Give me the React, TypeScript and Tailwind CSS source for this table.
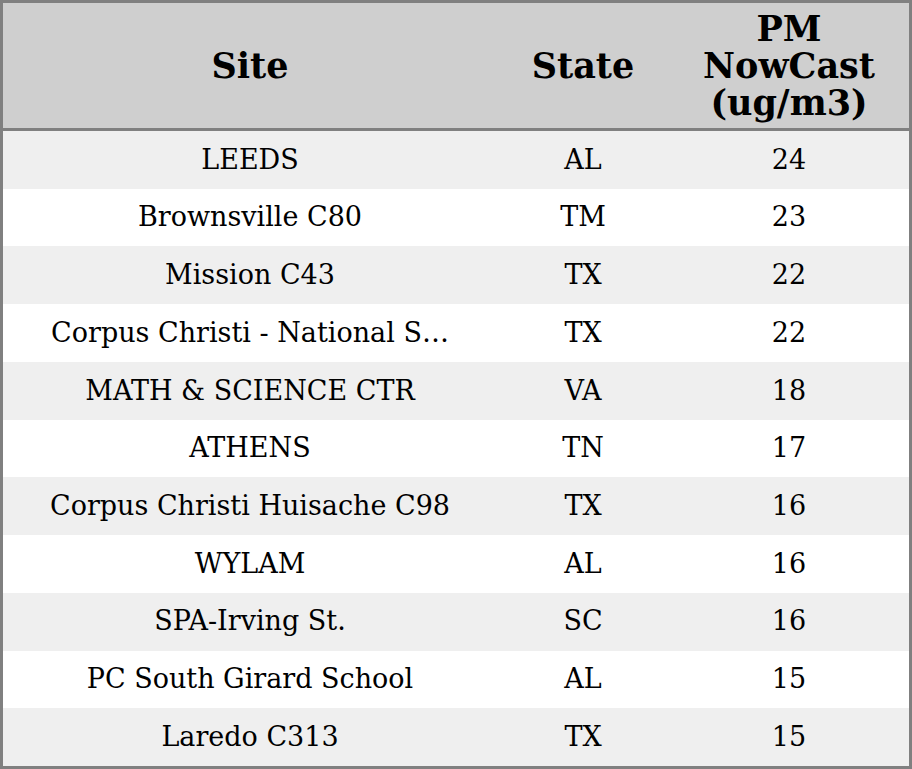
import React from "react";

const rows: [string, string, string][] = [
  ["LEEDS", "AL", "24"],
  ["Brownsville C80", "TM", "23"],
  ["Mission C43", "TX", "22"],
  ["Corpus Christi - National S…", "TX", "22"],
  ["MATH & SCIENCE CTR", "VA", "18"],
  ["ATHENS", "TN", "17"],
  ["Corpus Christi Huisache C98", "TX", "16"],
  ["WYLAM", "AL", "16"],
  ["SPA-Irving St.", "SC", "16"],
  ["PC South Girard School", "AL", "15"],
  ["Laredo C313", "TX", "15"],
];

export default function App() {
  return (
    <div
      className="w-[912px] h-[769px] bg-white text-black"
      style={{ fontFamily: '"DejaVu Serif", serif' }}
    >
      <div className="w-[912px] h-[769px] border-[3px] border-[#808080] flex flex-col">
        <div className="h-[128px] flex items-center bg-[#cfcfcf] font-bold text-[35px] leading-[37px] text-center border-b-[3px] border-[#808080] shrink-0">
          <div className="w-[494px]">Site</div>
          <div className="w-[172px]">State</div>
          <div className="w-[240px]">
            PM
            <br />
            NowCast
            <br />
            (ug/m3)
          </div>
        </div>
        <div className="flex-1 flex flex-col">
          {rows.map((r, i) => (
            <div
              key={i}
              className={
                "flex-1 flex items-center text-[27px] text-center " +
                (i % 2 === 0 ? "bg-[#efefef]" : "bg-white")
              }
            >
              <div className="w-[494px] whitespace-nowrap">{r[0]}</div>
              <div className="w-[172px]">{r[1]}</div>
              <div className="w-[240px]">{r[2]}</div>
            </div>
          ))}
        </div>
      </div>
    </div>
  );
}
